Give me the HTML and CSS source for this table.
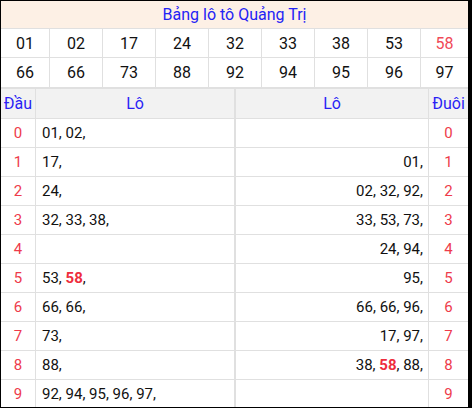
FILE: index.html
```html
<!DOCTYPE html>
<html lang="vi">
<head>
<meta charset="utf-8">
<title>Bảng lô tô Quảng Trị</title>
<link rel="stylesheet" href="styles.css">
</head>
<body>
<div class="board">
  <div class="title">Bảng lô tô Quảng Trị</div>
  <div class="nums">
    <div class="n">01</div><div class="n">02</div><div class="n">17</div><div class="n">24</div><div class="n">32</div><div class="n">33</div><div class="n">38</div><div class="n">53</div><div class="n hot">58</div>
    <div class="n r2">66</div><div class="n r2">66</div><div class="n r2">73</div><div class="n r2">88</div><div class="n r2">92</div><div class="n r2">94</div><div class="n r2">95</div><div class="n r2">96</div><div class="n r2">97</div>
  </div>
  <div class="lo">
    <div class="h c1">Đầu</div><div class="h c2">Lô</div><div class="h c3">Lô</div><div class="h c4">Đuôi</div>

    <div class="d c1">0</div><div class="l c2"><span>01, 02,</span></div><div class="l c3"></div><div class="d c4">0</div>
    <div class="d c1">1</div><div class="l c2"><span>17,</span></div><div class="l c3"><span>01,</span></div><div class="d c4">1</div>
    <div class="d c1">2</div><div class="l c2"><span>24,</span></div><div class="l c3"><span>02, 32, 92,</span></div><div class="d c4">2</div>
    <div class="d c1">3</div><div class="l c2"><span>32, 33, 38,</span></div><div class="l c3"><span>33, 53, 73,</span></div><div class="d c4">3</div>
    <div class="d c1">4</div><div class="l c2"></div><div class="l c3"><span>24, 94,</span></div><div class="d c4">4</div>
    <div class="d c1">5</div><div class="l c2"><span>53, <b class="red">58</b>,</span></div><div class="l c3"><span>95,</span></div><div class="d c4">5</div>
    <div class="d c1">6</div><div class="l c2"><span>66, 66,</span></div><div class="l c3"><span>66, 66, 96,</span></div><div class="d c4">6</div>
    <div class="d c1">7</div><div class="l c2"><span>73,</span></div><div class="l c3"><span>17, 97,</span></div><div class="d c4">7</div>
    <div class="d c1">8</div><div class="l c2"><span>88,</span></div><div class="l c3"><span>38, <b class="red">58</b>, 88,</span></div><div class="d c4">8</div>
    <div class="d c1">9</div><div class="l c2"><span>92, 94, 95, 96, 97,</span></div><div class="l c3"></div><div class="d c4">9</div>
  </div>
</div>
</body>
</html>
```
FILE: styles.css
```css
* { box-sizing: border-box; }
html, body { margin: 0; padding: 0; background: #fff; }
body { font-family: Roboto, "Noto Sans", sans-serif; color: #111; }

.board {
  width: 472px;
  height: 408px;
  overflow: hidden;
  border: 1px solid #000;
  border-right-width: 4px;
}

.title {
  height: 28px;
  background: #fdf0e5;
  border-bottom: 1px solid #e0e0e0;
  color: #2323f5;
  font-size: 16px;
  display: flex;
  align-items: center;
  justify-content: center;
}

.nums {
  display: grid;
  grid-template-columns: 49px repeat(7, 53px) 47px;
}
.n {
  height: 29px;
  border-right: 1px solid #e0e0e0;
  border-bottom: 1px solid #e0e0e0;
  display: flex;
  align-items: center;
  justify-content: center;
  font-size: 16px;
  color: #111;
}
.n:nth-child(9n) { border-right: none; }
.n.r2 { height: 31px; border-bottom-width: 2px; }
.n.hot { color: #f04a57; }

.lo {
  display: grid;
  grid-template-columns: 35px 200px 193px 39px;
}
.lo > div {
  height: 29px;
  border-bottom: 1px solid #e0e0e0;
  display: flex;
  align-items: center;
  font-size: 15px;
}
.lo .h {
  height: 30px;
  background: #f2f2f2;
  color: #2a1ff5;
  justify-content: center;
  font-size: 16px;
}
.c1 { border-right: 1px solid #e0e0e0; }
.c2 { border-right: 2px solid #e0e0e0; }
.c3 { border-right: 1px solid #e0e0e0; }

.lo .d { justify-content: center; color: #ee3b4b; }
.lo .l { color: #111; }
.lo .l.c2 { justify-content: flex-start; padding-left: 6px; }
.lo .l.c3 { justify-content: flex-end; padding-right: 5px; }
.red { color: #ee2d3d; font-weight: 700; }
```
